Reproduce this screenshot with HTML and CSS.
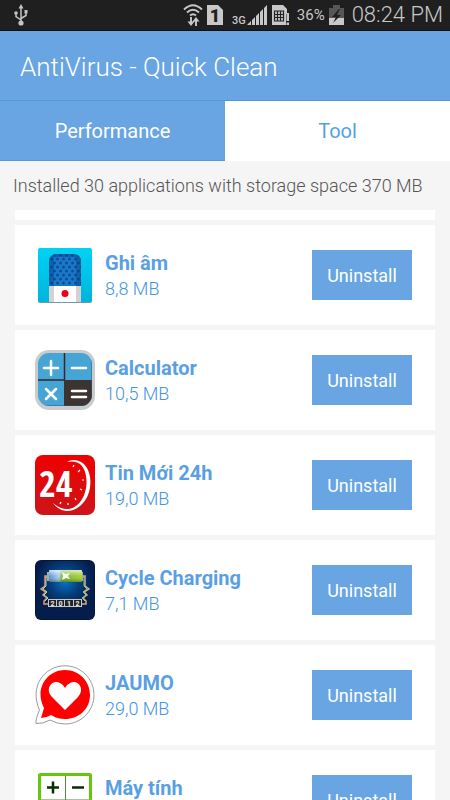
FILE: index.html
```html
<!DOCTYPE html>
<html lang="en">
<head>
    <meta charset="UTF-8">
    <meta name="viewport" content="width=device-width, initial-scale=1.0">
    <title>AntiVirus - Quick Clean</title>
    <link rel="stylesheet" href="styles.css">
</head>
<body>
    <div class="app">
        <div class="status-bar">
            <svg class="usb" width="14" height="22" viewBox="0 0 14 22" fill="none" stroke="#c4c4c4" stroke-width="1.5">
                <path d="M7 3v15M2 10v2.500l5 3.500M12 9v2.500l-5 3"/>
                <path d="M7 0l2.500 4.500h-5zM10.500 6h3v3.500h-3z" fill="#c4c4c4" stroke="none"/>
                <circle cx="2" cy="9" r="1.800" fill="#c4c4c4" stroke="none"/>
                <circle cx="7" cy="19" r="2.600" fill="#c4c4c4" stroke="none"/>
            </svg>
            <div class="status-icons">
                <svg width="20" height="24" viewBox="0 0 20 24" fill="none" stroke="#c8c8c8" stroke-width="1.900">
                    <path d="M1 6.500Q10-2 19 6.500M4 9.500q6-5.500 12 0M7 12.500q3-2.700 6 0"/>
                    <path d="M8 14v6M13 23v-6"/>
                    <path d="M4.500 18.500h7L8 23zM9.500 18.500h7L13 14z" fill="#c8c8c8" stroke="none"/>
                </svg>
                <svg width="16" height="22" viewBox="0 0 16 22">
                    <path d="M0 1h11l5 5v15H0z" fill="#c8c8c8"/>
                    <text class="sim-number" x="8" y="18" text-anchor="middle">1</text>
                </svg>
                <span class="network">3G</span>
                <svg class="signal" width="20" height="22" viewBox="0 0 20 22" fill="#c8c8c8">
                    <path d="M0 21l4-4v4zM5 16l3-3v8H5zM9 12l3-3v12H9zM13 8l3-3v16h-3zM17 4l3-3v20h-3z"/>
                </svg>
                <svg class="sim-card" width="19" height="22" viewBox="0 0 19 22">
                    <path d="M1 1h11l4 4v5h-1v11H1z" fill="#c8c8c8"/>
                    <path d="M3.500 7h9v10h-9zM3.500 10.500h9M3.500 13.500h9M6.500 7v10M9.500 7v10" fill="none" stroke="#222" stroke-width="1.200"/>
                    <path d="M15.500 9H18v8h-2.500zM15.500 18.500H18V21h-2.500z" fill="#c8c8c8"/>
                </svg>
                <span class="percent">36%</span>
                <svg class="battery" width="15" height="22" viewBox="0 0 15 22">
                    <path d="M4 1h7v3h4v17H0V4h4z" fill="#565656"/>
                    <path d="M0 14h15v7H0z" fill="#c8c8c8"/>
                    <path d="M10 5l-7 8h4l-3 6 8-8H8l3-6z" fill="#1f1f1f"/>
                </svg>
                <span class="clock">08:24 PM</span>
            </div>
        </div>

        <header class="header">
            <h1>AntiVirus - Quick Clean</h1>
        </header>

        <nav class="tabs">
            <button type="button" class="tab active">Performance</button>
            <button type="button" class="tab">Tool</button>
        </nav>

        <main class="content">
            <p class="summary">Installed 30 applications with storage space 370 MB</p>

            <div class="app-list">
                <div class="card card-end"></div>

                <div class="card">
                    <svg class="app-icon" viewBox="0 0 60 60">
                        <defs>
                            <linearGradient id="cyan" x2="0" y2="1"><stop stop-color="#00d2f4"/><stop offset="1" stop-color="#00b4dc"/></linearGradient>
                            <pattern id="dots" width="6" height="8" patternUnits="userSpaceOnUse">
                                <rect width="6" height="8" fill="#1878cc"/>
                                <circle cx="1.500" cy="2" r="1.500" fill="#0d4f94"/>
                                <circle cx="4.500" cy="6" r="1.500" fill="#0d4f94"/>
                            </pattern>
                        </defs>
                        <rect x="3" y="4" width="54" height="54" rx="2" fill="#6a9daa"/>
                        <rect x="3" y="3" width="54" height="54" rx="2" fill="url(#cyan)"/>
                        <path d="M14 41V17q0-8 8-8h16q8 0 8 8v24z" fill="url(#dots)"/>
                        <path d="M14 41V17q0-8 8-8h16q8 0 8 8v24h-5V12H19v29z" fill="#073d7b" opacity=".4"/>
                        <path d="M14 41h32v16H14z" fill="#fff"/>
                        <path d="M14 41h5v16h-5zM41 41h5v16h-5z" fill="#d2d2d2"/>
                        <circle cx="30" cy="48.500" r="3.500" fill="#ee0018"/>
                    </svg>
                    <div class="info">
                        <h2>Ghi âm</h2>
                        <p>8,8 MB</p>
                    </div>
                    <button type="button" class="uninstall">Uninstall</button>
                </div>

                <div class="card">
                    <svg class="app-icon" viewBox="0 0 60 60">
                        <clipPath id="calc"><rect x="3" y="3" width="54" height="53" rx="11"/></clipPath>
                        <rect width="60" height="60" rx="14" fill="#cbcbcb"/>
                        <g clip-path="url(#calc)">
                            <rect x="2" y="2" width="56" height="55" fill="#47a5d6"/>
                            <path d="M29 30h29v28H29z" fill="#3d3432"/>
                            <path d="M29.500 2v28M2 30h27" stroke="#30282b" stroke-width="1.500"/>
                            <path d="M3 56h54M57 3v53" stroke="#235f7c"/>
                        </g>
                        <path d="M9 18h14M16 11v14M37 18h14M11 39l10 10M21 39L11 49M37 41h14M37 47h14" fill="none" stroke="#fff" stroke-width="2.500" stroke-linecap="round"/>
                    </svg>
                    <div class="info">
                        <h2>Calculator</h2>
                        <p>10,5 MB</p>
                    </div>
                    <button type="button" class="uninstall">Uninstall</button>
                </div>

                <div class="card">
                    <svg class="app-icon" viewBox="0 0 60 60">
                        <linearGradient id="red" x2="0" y2="1"><stop stop-color="#ef0000"/><stop offset="1" stop-color="#cc1519"/></linearGradient>
                        <rect width="60" height="60" rx="8" fill="url(#red)"/>
                        <path d="M32 7C39 2 53 6 55 22C58 42 44 57 31 56Q23 55 18 48Q25 54 32 54C44 54 54 38 51 21Q48 4 32 7z" fill="#fff"/>
                        <path d="M39 10l-1 2M45 15l-2 2M49 25h-2M47 35l-2-1M41 45l-1-2M33 50v-2M25 49l1-2" stroke="#fff" stroke-width="1.200"/>
                        <text class="news-number" x="4" y="42">24</text>
                    </svg>
                    <div class="info">
                        <h2>Tin Mới 24h</h2>
                        <p>19,0 MB</p>
                    </div>
                    <button type="button" class="uninstall">Uninstall</button>
                </div>

                <div class="card">
                    <svg class="app-icon" viewBox="0 0 60 60">
                        <defs>
                            <radialGradient id="night" cy=".35"><stop stop-color="#0875c6"/><stop offset=".5" stop-color="#063d7b"/><stop offset="1" stop-color="#051d4b"/></radialGradient>
                            <linearGradient id="cell"><stop stop-color="#4b8bd4"/><stop offset=".3" stop-color="#a4ccea"/><stop offset=".4" stop-color="#70ac30"/><stop offset="1" stop-color="#a5cf21"/></linearGradient>
                            <linearGradient id="shine" x2="0" y2="1"><stop stop-color="#fff" stop-opacity=".7"/><stop offset=".5" stop-color="#fff" stop-opacity=".1"/><stop offset="1" stop-color="#163a10" stop-opacity=".4"/></linearGradient>
                        </defs>
                        <rect width="60" height="60" rx="6" fill="#061638"/>
                        <rect x="1" y="1" width="58" height="58" rx="5" fill="url(#night)"/>
                        <path d="M13 16h-3v10l-4 3 5 3-3 3 4 3-3 3v3h4" fill="none" stroke="#e39b72" stroke-width="1.500"/>
                        <path d="M12 17h-1v9l-3 3 4 3-3 3 4 3-3 3" fill="none" stroke="#a7d9ae"/>
                        <path d="M47 16h3v10l4 3-5 3 3 3-4 3 3 3v3h-4" fill="none" stroke="#d4a984" stroke-width="1.500"/>
                        <path d="M48 17h1v9l3 3-4 3 3 3-4 3 3 3" fill="none" stroke="#88c889"/>
                        <path d="M12 12h3v9h-3zM46 12h2v9h-2z" fill="#aaa"/>
                        <rect x="14" y="10" width="33" height="12" rx="1" fill="url(#cell)"/>
                        <rect x="14" y="10" width="33" height="12" rx="1" fill="url(#shine)"/>
                        <path d="M27 12l4 2 4-1-2 3 2 3-4-1-4 2 1-4z" fill="#f4ffe7"/>
                        <rect x="13" y="39" width="34" height="8" fill="#c8c8c8"/>
                        <path d="M14 40h7v6h-7zM22 40h7v6h-7zM30 40h8v6h-8zM39 40h7v6h-7z" fill="#242424"/>
                        <g class="counter" text-anchor="middle">
                            <text x="17.500" y="46">2</text>
                            <text x="25.500" y="46">0</text>
                            <text x="34" y="46">1</text>
                            <text x="42.500" y="46">2</text>
                        </g>
                    </svg>
                    <div class="info">
                        <h2>Cycle Charging</h2>
                        <p>7,1 MB</p>
                    </div>
                    <button type="button" class="uninstall">Uninstall</button>
                </div>

                <div class="card">
                    <svg class="app-icon" viewBox="0 0 60 60">
                        <path d="M30 .8C46 .8 59 14 59 30S46 59 30 59Q22 59 15 55Q8 59 1 58.500Q.5 54 4.500 45C-6 22 9 .8 30 .8z" fill="#fff" stroke="#999" stroke-width="1"/>
                        <path d="M30 5C44 5 55 16 55 30S44 54 30 54Q22 54 16 50Q11 53 6 53L9 43C-1 24 12 5 30 5z" fill="#f00"/>
                        <path d="M30 45L17 32C9 23 18 14 25 18Q29 20 30 23Q31 20 35 18C42 14 51 23 43 32z" fill="#fff"/>
                    </svg>
                    <div class="info">
                        <h2>JAUMO</h2>
                        <p>29,0 MB</p>
                    </div>
                    <button type="button" class="uninstall">Uninstall</button>
                </div>

                <div class="card">
                    <svg class="app-icon" viewBox="0 0 60 60">
                        <rect x="4.500" y="4.500" width="51" height="51" rx="1" fill="#fff" stroke="#65c60e" stroke-width="3"/>
                        <path d="M30.500 6v48M6 30h48" stroke="#48932d"/>
                        <path d="M12 17.500h12M18 11.500v12M37 17.500h12" stroke="#082e05" stroke-width="2.500"/>
                        <path d="M13 38l9 9M22 38l-9 9M37 40h12M37 45h12" stroke="#082e05" stroke-width="2.500"/>
                    </svg>
                    <div class="info">
                        <h2>Máy tính</h2>
                        <p></p>
                    </div>
                    <button type="button" class="uninstall">Uninstall</button>
                </div>
            </div>
        </main>
    </div>
</body>
</html>
```

FILE: styles.css
```css
* { box-sizing: border-box; }
body { margin: 0; font-family: Roboto, "Liberation Sans", sans-serif; background: #f5f5f5; }
h1, h2, p { margin: 0; }
button { border: none; font-family: inherit; cursor: pointer; }
svg { flex-shrink: 0; }

.app { display: flex; flex-direction: column; height: 100vh; overflow: hidden; }

/* status bar */
.status-bar { display: flex; justify-content: space-between; align-items: center; flex-shrink: 0; height: 31px; padding: 0 7px 0 14px; background: #1f1f1f; border-bottom: 1px solid #111; color: #c8c8c8; }
.status-icons { display: flex; align-items: center; gap: 4px; }
.sim-number { font-size: 18px; font-weight: 900; fill: #1f1f1f; }
.network { margin-left: 5px; padding-top: 11px; font-size: 11px; line-height: 12px; font-weight: 500; }
.signal { margin-left: -3px; }
.percent { margin-left: 3px; font-size: 15px; }
.clock { margin-left: 4px; font-size: 22px; line-height: 30px; font-weight: 300; }

/* title and tabs */
.header { flex-shrink: 0; padding: 21px 20px 18px; background: #68a5e2; color: #fff; }
.header h1 { font-size: 26px; line-height: 30px; font-weight: 300; }
.tabs { display: flex; flex-shrink: 0; border-top: 1px solid #4c9be2; }
.tab { flex: 1; padding: 0; font-size: 20px; line-height: 60px; background: #fff; color: #559fe3; }
.tab.active { background: #68a5e2; color: #fff; box-shadow: inset 0 -1px #4c9be2; }

/* application list */
.content { flex: 1; display: flex; flex-direction: column; min-height: 0; }
.summary { padding: 13px 13px 12px; font-size: 18px; line-height: 24px; font-weight: 300; color: #555; }
.app-list { display: flex; flex: 1; flex-direction: column; gap: 5px; min-height: 0; padding: 0 15px; overflow: hidden; }
.card { display: flex; flex-shrink: 0; align-items: center; height: 100px; padding: 0 23px 0 20px; background: #fff; }
.card-end { height: 10px; }
.app-icon { width: 60px; height: 60px; }
.info { flex: 1; padding-left: 10px; color: #5a9fe2; }
.info h2 { font-size: 20px; line-height: 26px; font-weight: 700; }
.info p { min-height: 25px; font-size: 18px; line-height: 25px; font-weight: 300; color: #4494e0; }
.uninstall { width: 100px; height: 50px; padding: 0; font-size: 18px; background: #68a5e2; color: #fff; }
.news-number { font-family: "Liberation Sans Narrow", "Open Sans Condensed", Lato, sans-serif; font-size: 36px; font-weight: 700; fill: #fff; }
.counter { font-size: 7px; font-weight: 700; fill: #eee; }
```
